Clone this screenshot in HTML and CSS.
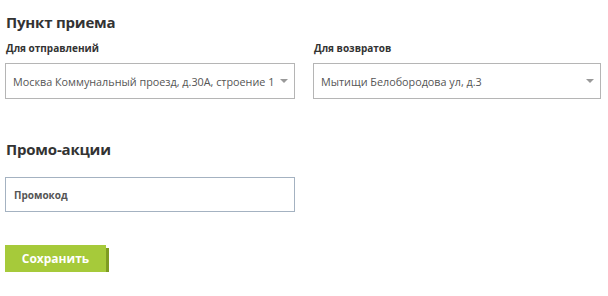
FILE: index.html
```html
<!DOCTYPE html>
<html lang="ru">
<head>
    <meta charset="UTF-8">
    <title>Пункт приема</title>
    <link rel="stylesheet" href="styles.css">
</head>
<body>
    <!-- Пункт приема -->
    <section class="section">
        <h2 class="section-title">Пункт приема</h2>
        <div class="fields">
            <div class="field">
                <label class="field-label">Для отправлений</label>
                <div class="select">
                    <span class="select-value">Москва Коммунальный проезд, д.30А, строение 1</span>
                    <span class="select-arrow"></span>
                </div>
            </div>
            <div class="field">
                <label class="field-label">Для возвратов</label>
                <div class="select">
                    <span class="select-value">Мытищи Белобородова ул, д.3</span>
                    <span class="select-arrow"></span>
                </div>
            </div>
        </div>
    </section>

    <!-- Промо-акции -->
    <section class="section promo">
        <h2 class="section-title">Промо-акции</h2>
        <div class="fields">
            <div class="field">
                <input class="promo-input" type="text" placeholder="Промокод">
            </div>
        </div>
    </section>

    <button class="btn-save">Сохранить</button>
</body>
</html>
```

FILE: styles.css
```css
* {
    margin: 0;
    padding: 0;
    box-sizing: border-box;
}

body {
    font-family: 'Open Sans', Arial, sans-serif;
    color: #333;
    background-color: #fff;
    padding: 12px 7px 0 5px;
}

.section-title {
    font-size: 15px;
    font-weight: 700;
    color: #333;
    line-height: 20px;
    padding-left: 1px;
    letter-spacing: -0.2px;
}

.fields {
    display: flex;
    gap: 18px;
}

.field {
    width: 290px;
}

.field + .field {
    width: 288px;
}

.field-label {
    display: block;
    font-size: 10px;
    font-weight: 700;
    color: #333;
    line-height: 14px;
    margin: 9px 0 8px 1px;
}

.select {
    height: 36px;
    border: 1px solid #b5b5b5;
    display: flex;
    align-items: center;
    justify-content: space-between;
    padding: 0 6px 0 7px;
}

.select-value {
    font-size: 10.8px;
    color: #555;
    white-space: nowrap;
}

.select-arrow {
    width: 0;
    height: 0;
    border-left: 4px solid transparent;
    border-right: 4px solid transparent;
    border-top: 4px solid #999;
}

.promo {
    margin-top: 40px;
}

.promo-input {
    display: block;
    width: 290px;
    height: 35px;
    margin-top: 18px;
    border: 1px solid #a4b2c1;
    padding: 0 8px;
    font-family: inherit;
    font-size: 10px;
    font-weight: 700;
    outline: none;
}

.promo-input::placeholder {
    color: #555;
}

.btn-save {
    margin-top: 33px;
    width: 101px;
    height: 27px;
    background-color: #a6ca3a;
    border: none;
    box-shadow: 3px 3px 0 #7e9c22;
    color: #fff;
    font-family: inherit;
    font-size: 12px;
    font-weight: 700;
    cursor: pointer;
}
```
